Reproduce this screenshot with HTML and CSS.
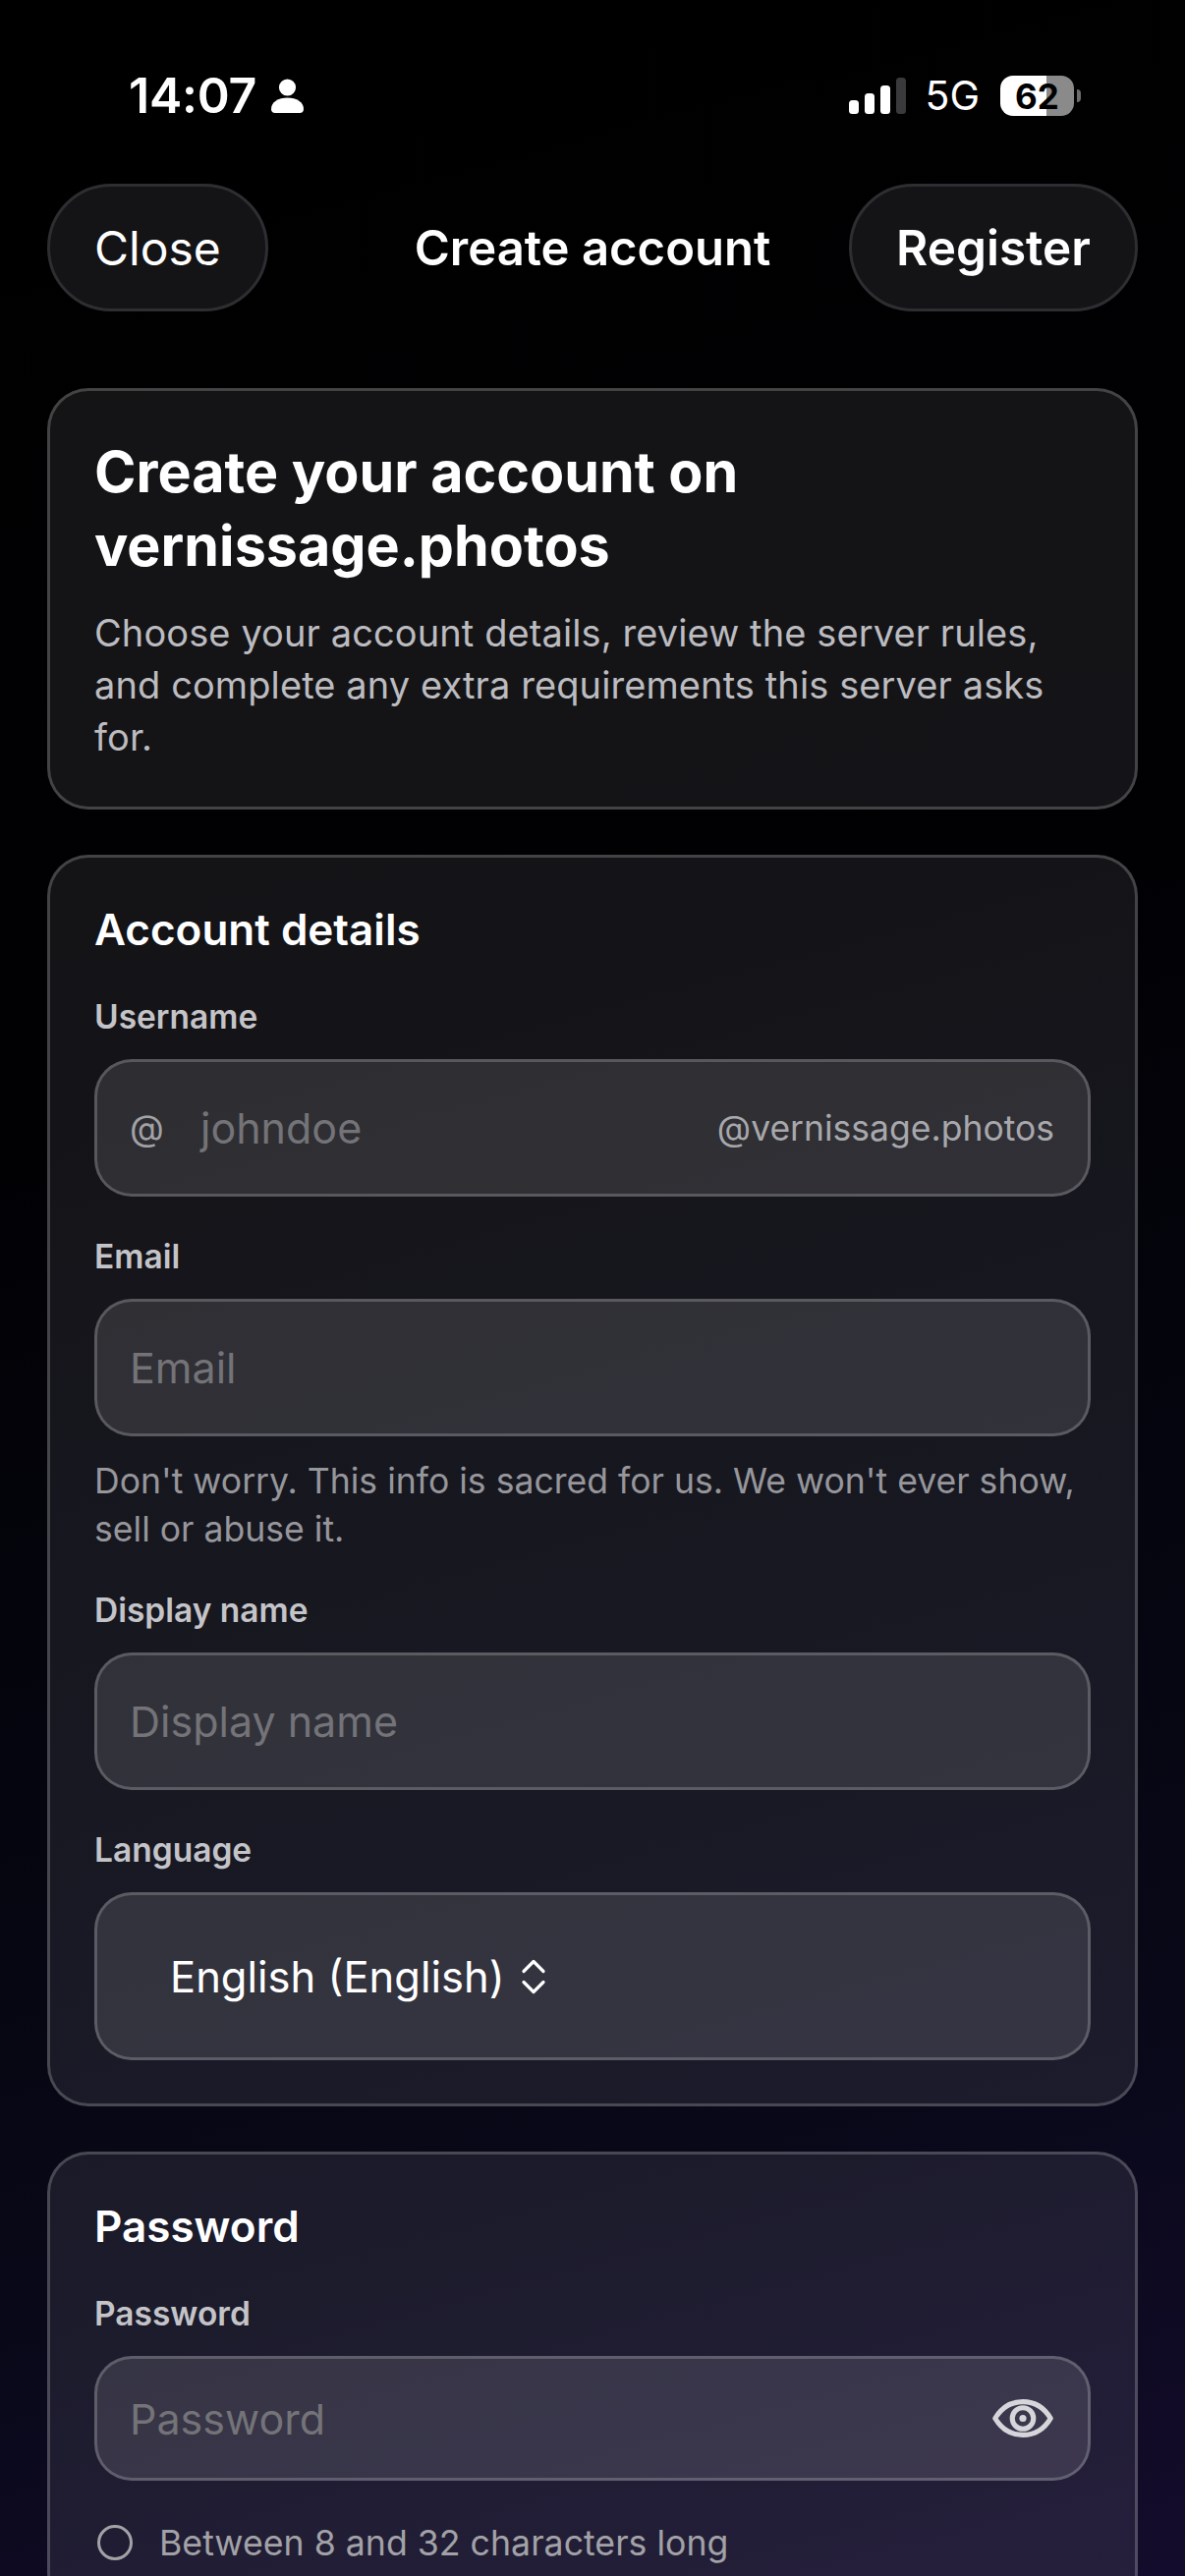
FILE: index.html
```html
<!DOCTYPE html>
<html lang="en">

<head>
    <meta charset="UTF-8">
    <meta name="viewport" content="width=device-width, initial-scale=1.0">
    <title>Create account</title>
    <link rel="stylesheet" href="styles.css">
</head>

<body>

    <!-- Status bar -->
    <div class="status-bar">
        <div class="status-left">
            <span class="time">14:07</span>
            <svg class="person-icon" viewBox="0 0 33 35" width="33" height="35">
                <circle cx="16.5" cy="9" r="8.6" fill="#fff" />
                <path d="M0 31c0-7 7-11.500 16.500-11.500S33 24 33 31c0 2.500-1.500 4-4 4H4c-2.500 0-4-1.500-4-4z" fill="#fff" />
            </svg>
        </div>
        <div class="status-right">
            <svg class="signal-icon" viewBox="0 0 58 37" width="58" height="37">
                <rect x="0" y="23" width="10" height="14" rx="3.500" fill="#fff" />
                <rect x="16" y="16" width="10" height="21" rx="3.500" fill="#fff" />
                <rect x="32" y="8" width="10" height="29" rx="3.500" fill="#fff" />
                <rect x="48" y="0" width="10" height="37" rx="3.500" fill="#3a3a3c" />
            </svg>
            <span class="network">5G</span>
            <div class="battery">
                <span class="battery-level">62</span>
            </div>
            <span class="battery-cap"></span>
        </div>
    </div>

    <!-- Top navigation -->
    <div class="nav">
        <button class="nav-btn">Close</button>
        <h1 class="nav-title">Create account</h1>
        <button class="nav-btn nav-btn-strong">Register</button>
    </div>

    <div class="content">

        <div class="card hero-card">
            <h2>Create your account on vernissage.photos</h2>
            <p>Choose your account details, review the server rules, and complete any extra requirements this server asks for.</p>
        </div>

        <!-- Account details -->
        <div class="card">
            <h3>Account details</h3>

            <div class="field">
                <div class="field-label">Username</div>
                <div class="input-box">
                    <span class="at-sign">@</span>
                    <span class="placeholder">johndoe</span>
                    <span class="domain">@vernissage.photos</span>
                </div>
            </div>

            <div class="field">
                <div class="field-label">Email</div>
                <div class="input-box">
                    <span class="placeholder">Email</span>
                </div>
                <div class="help-text">Don't worry. This info is sacred for us. We won't ever show, sell or abuse it.</div>
            </div>

            <div class="field">
                <div class="field-label">Display name</div>
                <div class="input-box">
                    <span class="placeholder">Display name</span>
                </div>
            </div>

            <div class="field">
                <div class="field-label">Language</div>
                <div class="input-box select-box">
                    <span class="select-value">English (English)</span>
                    <svg class="chevrons" viewBox="0 0 26 36" width="26" height="36">
                        <path d="M3 12.500 13 2.500l10 10M3 23.500l10 10 10-10" fill="none" stroke="#fff" stroke-width="3.200" stroke-linecap="round" stroke-linejoin="round" />
                    </svg>
                </div>
            </div>
        </div>

        <!-- Password -->
        <div class="card">
            <h3>Password</h3>

            <div class="field">
                <div class="field-label">Password</div>
                <div class="input-box password-box">
                    <span class="placeholder">Password</span>
                    <svg class="eye-icon" viewBox="0 0 60 38" width="62" height="39">
                        <path d="M2.500 19C9 8 18.500 2.500 30 2.500S51 8 57.500 19C51 30 41.500 35.500 30 35.500S9 30 2.500 19z" fill="none" stroke="#d6d6da" stroke-width="5" stroke-linejoin="round" />
                        <circle cx="30" cy="19" r="10.500" fill="none" stroke="#d6d6da" stroke-width="5" />
                        <circle cx="30" cy="19" r="3.500" fill="#d6d6da" />
                    </svg>
                </div>
            </div>

            <ul class="rules">
                <li><span class="rule-dot"></span>Between 8 and 32 characters long</li>
            </ul>
        </div>

    </div>

</body>

</html>
```

FILE: styles.css
```css
html {
    height: 100%;
    overflow: hidden;
}

body {
    font-family: Inter, 'Liberation Sans', sans-serif;
    margin: 0;
    height: 2622px;
    overflow: hidden;
    color: #fff;
    background: linear-gradient(165deg, #000 0%, #010104 40%, #080818 80%, #140c2c 100%);
}

.status-bar {
    display: flex;
    justify-content: space-between;
    align-items: center;
    height: 41px;
    padding: 77px 106px 0 131px;
}

.status-left {
    display: flex;
    align-items: center;
    gap: 15px;
}

.time {
    font-size: 50px;
    font-weight: 600;
    letter-spacing: -0.2px;
    line-height: 41px;
}

.status-right {
    display: flex;
    align-items: center;
}

.network {
    margin-left: 19px;
    font-size: 41px;
    font-weight: 400;
    line-height: 41px;
}

.battery {
    display: flex;
    justify-content: center;
    align-items: center;
    width: 75px;
    height: 41px;
    margin-left: 21px;
    border-radius: 13px;
    background: linear-gradient(90deg, #fff 63%, #8a8a8a 63%);
}

.battery-level {
    color: #000;
    font-size: 35px;
    font-weight: 700;
}

.battery-cap {
    width: 4px;
    height: 13px;
    margin-left: 3px;
    border-radius: 0 4px 4px 0;
    background: #6d6d6d;
}

.nav {
    display: grid;
    grid-template-columns: 1fr auto 1fr;
    align-items: center;
    margin-top: 69px;
    padding: 0 48px;
}

.nav-btn {
    justify-self: start;
    height: 130px;
    padding: 0 45px;
    border: 3px solid #2e2e32;
    border-radius: 65px;
    background: #141416;
    color: #fff;
    font-family: inherit;
    font-size: 48px;
    font-weight: 400;
}

.nav-btn-strong {
    justify-self: end;
    font-size: 49.5px;
    font-weight: 600;
}

.nav-title {
    margin: 0;
    font-size: 49px;
    font-weight: 600;
}

.content {
    display: flex;
    flex-direction: column;
    gap: 46px;
    margin: 78px 48px 0;
}

.card {
    box-sizing: border-box;
    padding: 43px 45px 44px;
    border: 3px solid rgba(255, 255, 255, 0.2);
    border-radius: 42px;
    background: rgba(240, 240, 255, 0.082);
}

.hero-card {
    padding-top: 45px;
}

.hero-card h2 {
    margin: 0;
    font-size: 57.4px;
    font-weight: 700;
    line-height: 75px;
}

.hero-card p {
    margin: 25px 0 0;
    color: #bcbcc0;
    font-size: 38px;
    letter-spacing: 0.1px;
    line-height: 53px;
}

h3 {
    margin: 0 0 39px;
    font-size: 44px;
    font-weight: 600;
    line-height: 60px;
}

.field {
    margin-bottom: 41px;
}

.field:last-child {
    margin-bottom: 0;
}

.field-label {
    margin-bottom: 23px;
    color: #c4c4c8;
    font-size: 33.5px;
    font-weight: 600;
    line-height: 40px;
}

.input-box {
    display: flex;
    align-items: center;
    box-sizing: border-box;
    height: 140px;
    padding: 0 34px 0 33px;
    border: 3px solid rgba(255, 255, 255, 0.2);
    border-radius: 38px;
    background: rgba(255, 255, 255, 0.115);
    font-size: 43px;
}

.placeholder {
    color: #737378;
}

.at-sign {
    width: 72px;
    color: #a2a2a6;
    font-size: 36px;
}

.domain {
    margin-left: auto;
    color: #a8a8ac;
    font-size: 35.5px;
}

.help-text {
    margin-top: 21px;
    margin-bottom: -3px;
    color: #96969b;
    font-size: 35.6px;
    line-height: 49px;
}

.select-box {
    height: 171px;
    padding-left: 74px;
    gap: 16px;
    font-size: 43.5px;
}

.select-value {
    color: #fff;
}

.password-box {
    justify-content: space-between;
    height: 127px;
    padding-right: 35px;
}

.rules {
    list-style-type: none;
    margin: 0;
    padding: 0;
}

.rules li {
    display: flex;
    align-items: center;
    gap: 27px;
    margin-top: -3px;
    color: #a2a2a6;
    font-size: 35.7px;
    line-height: 50px;
}

.rule-dot {
    box-sizing: border-box;
    width: 36px;
    height: 36px;
    margin-left: 3px;
    border: 3px solid #a2a2a6;
    border-radius: 50%;
}
```
